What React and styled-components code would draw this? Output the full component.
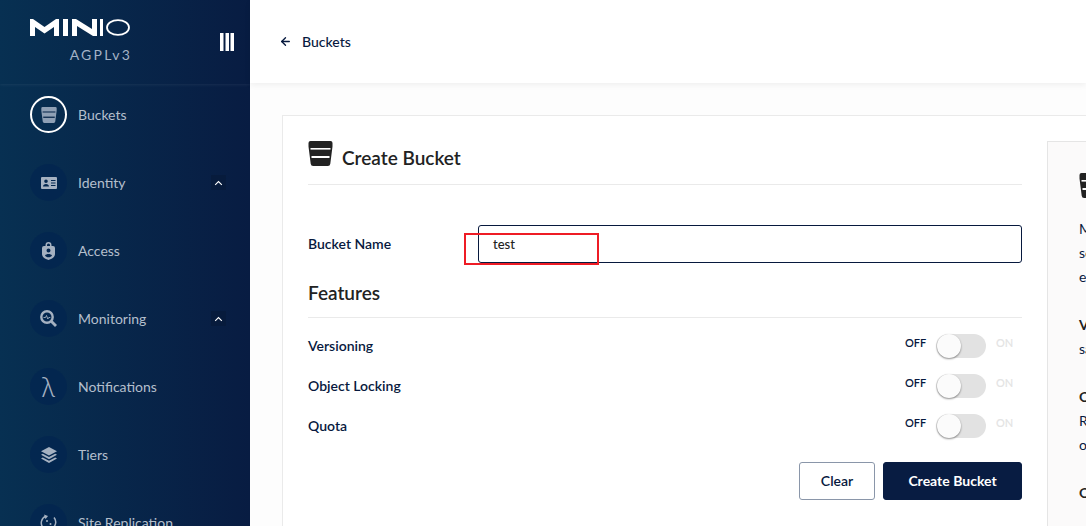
import styled, { createGlobalStyle } from "styled-components";
import { ArrowLeft } from "lucide-react";

const GlobalStyle = createGlobalStyle`
    html, body {
        margin: 0;
        padding: 0;
        background: #fff;
    }
    * {
        box-sizing: border-box;
    }
`;

const Page = styled.div`
    width: 1086px;
    height: 526px;
    display: flex;
    overflow: hidden;
    position: relative;
    font-family: Lato, "Liberation Sans", sans-serif;
    color: #07193e;
`;

const Sidebar = styled.aside`
    width: 250px;
    flex-shrink: 0;
    background: linear-gradient(90deg, #073052 0%, #081c42 100%);
    display: flex;
    flex-direction: column;
`;

const Brand = styled.div`
    height: 84px;
    flex-shrink: 0;
    padding: 19px 16px 0 30px;
    display: flex;
    justify-content: space-between;
    box-shadow: 0 1px 3px rgba(255, 255, 255, 0.07);
`;

const LogoBlock = styled.div`
    width: 100px;
    display: flex;
    flex-direction: column;
    align-items: flex-end;
    gap: 10px;
`;

const License = styled.div`
    font-size: 14px;
    line-height: 17px;
    letter-spacing: 2.2px;
    margin-right: -2px;
    color: #a4b3c6;
`;

const MenuToggle = styled.svg`
    width: 14px;
    height: 18px;
    margin-top: 14px;
`;

const Nav = styled.nav`
    padding-top: 12px;
    display: flex;
    flex-direction: column;
    gap: 31px;
`;

const NavItem = styled.div`
    height: 37px;
    padding: 0 24px 0 30px;
    display: flex;
    align-items: center;
    flex-shrink: 0;
`;

const NavIcon = styled.div`
    width: 37px;
    height: 37px;
    border-radius: 50%;
    display: flex;
    align-items: center;
    justify-content: center;
    color: #a5b1c1;
    background: ${(p) => (p.$active ? "transparent" : "rgba(0, 35, 80, 0.55)")};
    border: ${(p) => (p.$active ? "2px solid #fff" : "none")};
`;

const Lambda = styled.span`
    font-size: 26px;
    line-height: 1;
    font-family: "Noto Sans", sans-serif;
    font-weight: 300;
`;

const NavLabel = styled.span`
    margin-left: 11px;
    flex: 1;
    font-size: 14px;
    color: #b4bfcc;
`;

const Expand = styled.div`
    width: 15px;
    height: 15px;
    display: flex;
    align-items: center;
    justify-content: center;
    background: #071b3c;
`;

const Main = styled.main`
    flex: 1;
    min-width: 0;
    background: #fdfdfd;
`;

const TopBar = styled.header`
    height: 83px;
    background: #fff;
    padding-left: 29px;
    display: flex;
    align-items: center;
    gap: 10px;
    font-size: 14px;
    font-weight: 500;
    box-shadow: 0 2px 6px rgba(0, 0, 0, 0.06);
`;

const Content = styled.div`
    padding: 32px 0 0 32px;
`;

const Card = styled.section`
    width: 900px;
    height: 460px;
    background: #fff;
    border: 1px solid #eaeaea;
    padding: 25px;
    display: flex;
    gap: 25px;
    align-items: flex-start;
`;

const Form = styled.form`
    width: 714px;
    flex-shrink: 0;
`;

const Title = styled.h1`
    margin: 0;
    height: 44px;
    padding-bottom: 15px;
    display: flex;
    align-items: flex-end;
    gap: 9px;
    font-size: 19px;
    font-weight: 600;
    line-height: 23px;
    color: #222;
    border-bottom: 1px solid #eaeaea;
`;

const TitleIcon = styled.span`
    align-self: flex-start;
    height: 25px;
    display: flex;
`;

const NameRow = styled.label`
    margin-top: 40px;
    display: flex;
    align-items: center;
    font-size: 14px;
    font-weight: 600;
`;

const NameLabel = styled.span`
    width: 170px;
    padding-bottom: 2px;
`;

const NameInput = styled.div`
    flex: 1;
    height: 38px;
    padding-left: 14px;
    display: flex;
    align-items: center;
    font-size: 13px;
    font-weight: 500;
    color: #222;
    border: 1px solid #07193e;
    border-radius: 3px;
`;

const SectionTitle = styled.h2`
    margin: 18px 0 0;
    height: 37px;
    padding-bottom: 12px;
    font-size: 19px;
    font-weight: 600;
    line-height: 24px;
    color: #222;
    border-bottom: 1px solid #eaeaea;
`;

const Features = styled.div`
    margin-top: 8px;
    display: flex;
    flex-direction: column;
`;

const FeatureRow = styled.div`
    height: 40px;
    display: flex;
    align-items: center;
    justify-content: space-between;
    font-size: 14px;
    font-weight: 600;
`;

const FeatureName = styled.span`
    padding-bottom: 2px;
`;

const SwitchGroup = styled.div`
    width: 117px;
    display: flex;
    align-items: center;
    font-size: 11px;
    font-weight: 600;
    margin-top: -8px;
`;

const SwitchText = styled.span`
    width: ${(p) => (p.$on ? "36px" : "31px")};
    padding-left: ${(p) => (p.$on ? "10px" : "0")};
    color: ${(p) => (p.$on ? "#e4e4e4" : "#07193e")};
`;

const Track = styled.span`
    width: 50px;
    height: 24px;
    border-radius: 12px;
    background: #e2e2e2;
    display: flex;
    align-items: center;
    margin-top: 8px;
`;

const Knob = styled.span`
    width: 24px;
    height: 24px;
    margin-left: 1px;
    border-radius: 50%;
    background: #fbfbfb;
    box-shadow: 0 1px 2px rgba(0, 0, 0, 0.45);
`;

const Actions = styled.div`
    margin-top: 16px;
    display: flex;
    justify-content: flex-end;
    gap: 8px;
`;

const Button = styled.button`
    height: 38px;
    width: ${(p) => (p.$primary ? "139px" : "76px")};
    padding: 0 0 2px;
    font-family: inherit;
    font-size: 14px;
    font-weight: ${(p) => (p.$primary ? 700 : 600)};
    border-radius: 3px;
    color: ${(p) => (p.$primary ? "#fff" : "#07193e")};
    background: ${(p) => (p.$primary ? "#081c42" : "#fff")};
    border: 1px solid ${(p) => (p.$primary ? "#081c42" : "#8a96a9")};
`;

const HelpBox = styled.aside`
    width: 360px;
    flex-shrink: 0;
    min-height: 420px;
    padding: 31px 31px;
    background: #fbfafa;
    border: 1px solid #e5e5e5;
    font-size: 14px;
    line-height: 24px;
    color: #07193e;
`;

const HelpText = styled.p`
    margin: 12px 0 24px;
`;

const HelpTerm = styled.strong`
    font-weight: 700;
    color: #222;
`;

function BucketIcon({ size = 25, color = "#222", gap = "#fff" }) {
    return (
        <svg width={size} height={size} viewBox="0 0 24 25">
            <path
                fill={color}
                d="M2 0h20a2 2 0 0 1 2 2v3.500l-2.200 17.300a2.500 2.500 0 0 1-2.500 2.200H4.700a2.500 2.500 0 0 1-2.500-2.200L0 5.500V2a2 2 0 0 1 2-2z"
            />
            <rect x="2" y="7" width="20" height="1.600" fill={gap} />
            <rect x="3" y="15" width="18" height="2" fill={gap} />
        </svg>
    );
}

function MinioLogo() {
    return (
        <svg width="100" height="17" viewBox="0 0 100 17">
            <path fill="#fff" d="M0 17V0h3l11.500 8L26 0h3v17h-5V8l-9.500 6.500L5 8v9z" />
            <rect x="33" y="0" width="5" height="17" fill="#fff" />
            <path fill="#fff" d="M42 17V0h4l16 10V0h5v17h-4L47 7v10z" />
            <rect x="70" y="0" width="3" height="17" fill="#fff" />
            <ellipse cx="88" cy="8.500" rx="11" ry="7.400" fill="none" stroke="#fff" strokeWidth="1.800" />
        </svg>
    );
}

function IdentityIcon() {
    return (
        <svg width="16" height="12" viewBox="0 0 16 12">
            <path
                fill="currentColor"
                fillRule="evenodd"
                d="M1 0h14a1 1 0 0 1 1 1v10a1 1 0 0 1-1 1H1a1 1 0 0 1-1-1V1a1 1 0 0 1 1-1zm4 2.500a1.800 1.800 0 1 0 0 3.600 1.800 1.800 0 0 0 0-3.600zM2 9.500h6c0-1.500-1.300-2.500-3-2.500s-3 1-3 2.500zM10 3v1h4.500V3zm0 2.500v1h4.500v-1zM10 8v1h4.500V8z"
            />
        </svg>
    );
}

function AccessIcon() {
    return (
        <svg width="13" height="18" viewBox="0 0 13 18">
            <path
                fill="currentColor"
                fillRule="evenodd"
                d="M3.500 4V3a3 3 0 0 1 6 0v1H11a2 2 0 0 1 2 2v6c0 3-3 5-6.500 6C3 17 0 15 0 12V6a2 2 0 0 1 2-2zM5 4h3V3a1.500 1.500 0 0 0-3 0zm1.500 2.500a2 2 0 1 0 0 4 2 2 0 0 0 0-4zM3 13.500c.6 1 2 1.800 3.500 1.800s2.900-.8 3.500-1.800c-.6-1-2-1.500-3.500-1.500s-2.900.5-3.500 1.500z"
            />
        </svg>
    );
}

function MonitoringIcon() {
    return (
        <svg width="17" height="17" viewBox="0 0 17 17">
            <circle cx="7" cy="7" r="5.700" fill="none" stroke="currentColor" strokeWidth="2.400" />
            <path d="M3.500 7.500h2l1-2 1.300 3.500 1-1.500h1.500" fill="none" stroke="currentColor" strokeWidth="0.900" />
            <path d="M11.500 11.500L16 16" stroke="currentColor" strokeWidth="2.800" />
        </svg>
    );
}

function TiersIcon() {
    return (
        <svg width="16" height="16" viewBox="0 0 16 16">
            <path fill="currentColor" d="M8 0l8 4.200-8 4.300-8-4.300z" />
            <path fill="currentColor" d="M1.800 6.700L0 7.800l8 4.400 8-4.400-1.800-1.100L8 10z" />
            <path fill="currentColor" d="M1.800 10.400L0 11.500 8 16l8-4.500-1.800-1.100L8 13.800z" />
        </svg>
    );
}

function ReplicationIcon() {
    return (
        <svg width="17" height="17" viewBox="0 0 17 17">
            <path d="M3 13.500A7 7 0 0 1 6 2.300" fill="none" stroke="currentColor" strokeWidth="1.500" />
            <path d="M4 0.500l4 1.500-2.500 3.300z" fill="currentColor" />
            <path d="M14 3.500a7 7 0 0 1-3 11.200" fill="none" stroke="currentColor" strokeWidth="1.500" />
            <path d="M13 16.500l-4-1.500 2.500-3.300z" fill="currentColor" />
            <circle cx="7" cy="7" r="1" fill="currentColor" />
            <circle cx="10.500" cy="10" r="1" fill="currentColor" />
        </svg>
    );
}

function ExpandIcon() {
    return (
        <svg width="9" height="6" viewBox="0 0 9 6">
            <path d="M1.200 4.800l3.300-3.300 3.300 3.300" fill="none" stroke="#fff" strokeWidth="1.100" />
        </svg>
    );
}

const navItems = [
    { label: "Buckets", icon: <BucketIcon size={16} color="#8fa0b5" gap="#07264a" />, active: true },
    { label: "Identity", icon: <IdentityIcon />, expandable: true },
    { label: "Access", icon: <AccessIcon /> },
    { label: "Monitoring", icon: <MonitoringIcon />, expandable: true },
    { label: "Notifications", icon: <Lambda>λ</Lambda> },
    { label: "Tiers", icon: <TiersIcon /> },
    { label: "Site Replication", icon: <ReplicationIcon /> },
];

const features = ["Versioning", "Object Locking", "Quota"];

const Annotation = styled.div`
    position: absolute;
    left: 464px;
    top: 233px;
    width: 135px;
    height: 32px;
    border: 2px solid #ee1c25;
`;

function App() {
    return (
        <Page>
            <GlobalStyle />
            <Sidebar>
                <Brand>
                    <LogoBlock>
                        <MinioLogo />
                        <License>AGPLv3</License>
                    </LogoBlock>
                    <MenuToggle viewBox="0 0 14 18">
                        <path fill="#fff" d="M0 0h3.500v18H0zM5.500 0H9v18H5.500zM10.500 0H14v18h-3.500z" />
                    </MenuToggle>
                </Brand>
                <Nav>
                    {navItems.map((item) => (
                        <NavItem key={item.label}>
                            <NavIcon $active={item.active}>{item.icon}</NavIcon>
                            <NavLabel>{item.label}</NavLabel>
                            {item.expandable && (
                                <Expand>
                                    <ExpandIcon />
                                </Expand>
                            )}
                        </NavItem>
                    ))}
                </Nav>
            </Sidebar>
            <Main>
                <TopBar>
                    <ArrowLeft size={13} strokeWidth={2.500} />
                    Buckets
                </TopBar>
                <Content>
                    <Card>
                        <Form>
                            <Title>
                                <TitleIcon>
                                    <BucketIcon />
                                </TitleIcon>
                                Create Bucket
                            </Title>
                            <NameRow>
                                <NameLabel>Bucket Name</NameLabel>
                                <NameInput>test</NameInput>
                            </NameRow>
                            <SectionTitle>Features</SectionTitle>
                            <Features>
                                {features.map((name) => (
                                    <FeatureRow key={name}>
                                        <FeatureName>{name}</FeatureName>
                                        <SwitchGroup>
                                            <SwitchText>OFF</SwitchText>
                                            <Track>
                                                <Knob />
                                            </Track>
                                            <SwitchText $on>ON</SwitchText>
                                        </SwitchGroup>
                                    </FeatureRow>
                                ))}
                            </Features>
                            <Actions>
                                <Button type="button">Clear</Button>
                                <Button type="button" $primary>
                                    Create Bucket
                                </Button>
                            </Actions>
                        </Form>
                        <HelpBox>
                            <BucketIcon />
                            <HelpText>
                                MinIO uses buckets to
                                <br />
                                sort and organize objects
                                <br />
                                each with its own key.
                            </HelpText>
                            <HelpText>
                                <HelpTerm>Versioning</HelpTerm>
                                <br />
                                saves multiple versions.
                            </HelpText>
                            <HelpText>
                                <HelpTerm>Object Locking</HelpTerm>
                                <br />
                                Required for retention
                                <br />
                                of objects.
                            </HelpText>
                            <HelpText>
                                <HelpTerm>Quota</HelpTerm>
                            </HelpText>
                        </HelpBox>
                    </Card>
                </Content>
            </Main>
            <Annotation />
        </Page>
    );
}

export default App;
